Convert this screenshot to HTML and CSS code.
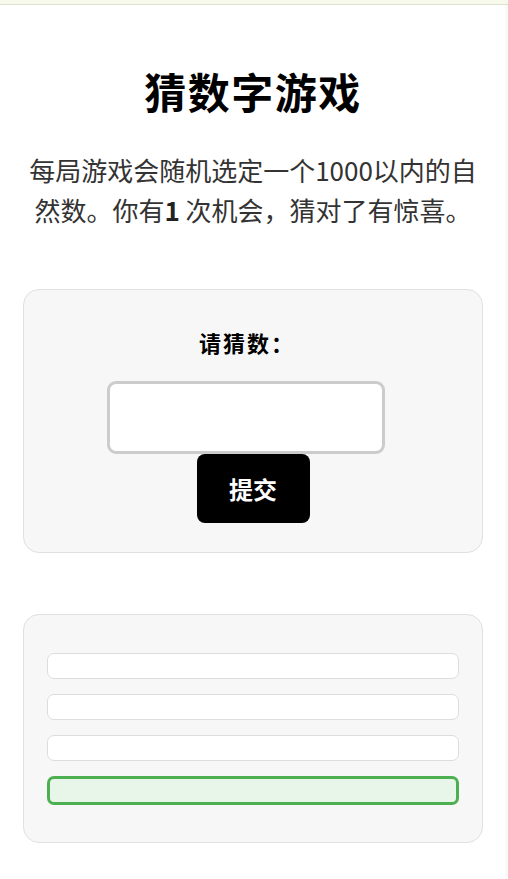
FILE: index.html
```html
<!DOCTYPE html>
<html lang="zh">
<head>
<meta charset="utf-8">
<title>猜数字游戏</title>
<link rel="stylesheet" href="styles.css">
</head>
<body>
<div class="topbar"></div>
<div class="frame">
  <main class="page">
    <h1 class="title">猜数字游戏</h1>
    <p class="intro">每局游戏会随机选定一个1000以内的自然数。你有<b>1</b> 次机会，猜对了有惊喜。</p>
    <section class="card guess">
      <label class="label" for="num">请猜数：</label>
      <input class="field" id="num" type="text">
      <button class="submit" type="button">提交</button>
    </section>
    <section class="card results">
      <div class="row"></div>
      <div class="row"></div>
      <div class="row"></div>
      <div class="row row-ok"></div>
    </section>
  </main>
  <div class="edge"></div>
</div>
</body>
</html>
```
FILE: styles.css
```css
* { box-sizing: border-box; }
html, body { margin: 0; padding: 0; background: #fff; }
body {
  font-family: "Noto Sans CJK SC", "Noto Sans", sans-serif;
  color: #000;
  height: 879px;
  overflow: hidden;
}
.topbar {
  height: 5px;
  background: #f7f9ec;
  border-bottom: 1px solid #dde2cc;
}
.frame {
  display: flex;
  height: 874px;
}
.page {
  flex: 1;
  padding: 0 22px 0 23px;
}
.edge {
  width: 3px;
  background: #f9f9f9;
}
.title {
  margin: 60px 0 0;
  font-size: 42px;
  line-height: 52px;
  font-weight: 700;
  text-align: center;
  letter-spacing: 1.5px;
}
.intro {
  margin: 33px -4px 0;
  font-size: 26px;
  line-height: 40px;
  letter-spacing: 0;
  color: #333;
  text-align: center;
}
.intro b { color: #222; }
.card {
  background: #f7f7f7;
  border: 1px solid #e0e0e0;
  border-radius: 16px;
}
.guess {
  margin-top: 59px;
  height: 264px;
  padding-top: 37px;
  display: flex;
  flex-direction: column;
  align-items: center;
}
.label {
  font-size: 22px;
  line-height: 30px;
  font-weight: 700;
  letter-spacing: 2px;
  margin-right: 12px;
}
.field {
  margin-top: 24px;
  margin-right: 15px;
  width: 278px;
  height: 73px;
  border: 3px solid #cccccc;
  border-radius: 9px;
  background: #fff;
  outline: none;
}
.submit {
  width: 113px;
  height: 69px;
  border: none;
  border-radius: 8px;
  background: #000;
  color: #fff;
  font-family: inherit;
  font-size: 24px;
  font-weight: 700;
}
.results {
  margin-top: 61px;
  height: 229px;
  padding: 38px 23px 0;
  display: flex;
  flex-direction: column;
  gap: 15px;
}
.row {
  height: 26px;
  background: #fff;
  border: 1px solid #dddddd;
  border-radius: 7px;
}
.row-ok {
  height: 29px;
  background: #e8f5e9;
  border: 3px solid #4caf50;
}
```
